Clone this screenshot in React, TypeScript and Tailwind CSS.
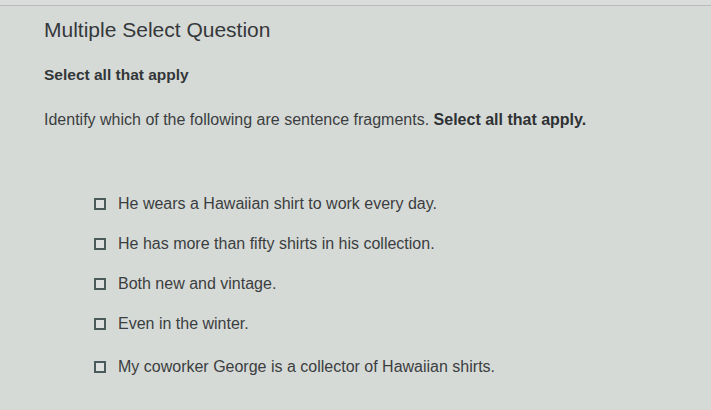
const options = [
  "He wears a Hawaiian shirt to work every day.",
  "He has more than fifty shirts in his collection.",
  "Both new and vintage.",
  "Even in the winter.",
  "My coworker George is a collector of Hawaiian shirts.",
];

export default function App() {
  return (
    <div className="w-[711px] h-[410px] overflow-hidden bg-[#d6dad7] font-['Liberation_Sans',Arial,sans-serif] text-[#3b3e40]">
      <div className="h-[6px] border-b border-[#b9bcba] bg-[#d9dcda]" />
      <div className="pl-[44px] pt-[12px]">
        <h1 className="text-[21px] leading-[24px] text-[#35383a]">Multiple Select Question</h1>
        <p className="mt-[24px] text-[15.5px] leading-[18px] font-bold text-[#333638]">Select all that apply</p>
        <p className="mt-[26px] text-[16px] leading-[20px]">
          Identify which of the following are sentence fragments.{" "}
          <span className="font-bold text-[#2f3234]">Select all that apply.</span>
        </p>
        <ul className="mt-[64px] ml-[50px] flex flex-col gap-[20px]">
          {options.map((o, i) => (
            <li key={o} className={`flex items-center gap-[12px] ${i === 4 ? "mt-[3px]" : ""}`}>
              <span className="w-[12px] h-[12px] border-2 border-[#4b5a5b] bg-[#dde0de]" />
              <span className="text-[16px] leading-[20px]">{o}</span>
            </li>
          ))}
        </ul>
      </div>
    </div>
  );
}
